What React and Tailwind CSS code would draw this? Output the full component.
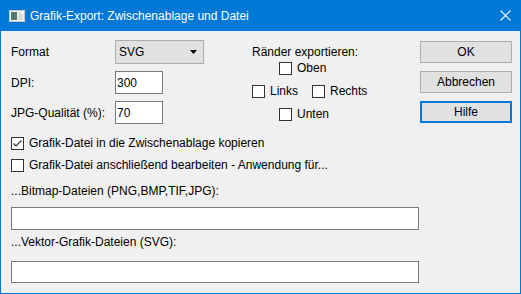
import React from 'react';

const font = { fontFamily: '"Liberation Sans", Arial, sans-serif' };

const CheckBox = ({ checked, label, className = '' }) => (
  <div className={`flex items-center h-[13px] ${className}`}>
    <span className="w-[13px] h-[13px] border border-[#333333] bg-white flex items-center justify-center shrink-0">
      {checked && (
        <svg width="11" height="11" viewBox="0 0 11 11">
          <path d="M1.5 5.5 L4 8 L9.5 2.5" fill="none" stroke="#333" strokeWidth="1.2" />
        </svg>
      )}
    </span>
    {label && <span className="ml-[5px] text-[12px] leading-[13px] text-black whitespace-nowrap">{label}</span>}
  </div>
);

const Button = ({ children, focused }) => (
  <button
    className={`w-[92px] h-[22px] bg-[#e1e1e1] text-[12px] text-black flex items-center justify-center ${
      focused ? 'border-2 border-[#0078d7]' : 'border border-[#adadad]'
    }`}
  >
    {children}
  </button>
);

export default function App() {
  return (
    <div className="w-[521px] h-[294px] flex flex-col select-none" style={font}>
      {/* title bar */}
      <div className="h-[31px] bg-[#0078d7] flex items-center pl-[9px] pr-[10px] shrink-0">
        <svg width="16" height="12" viewBox="0 0 16 12">
          <rect x="0.5" y="0.5" width="15" height="11" fill="#f4f4f4" stroke="#c8c8c8" />
          <rect x="2" y="2" width="6" height="8" fill="#4f7e68" />
          <rect x="9" y="2" width="5" height="8" fill="#dcdcdc" />
          <rect x="12" y="2" width="2" height="2" fill="#ffffff" />
        </svg>
        <span className="ml-[5px] text-white text-[12px]">Grafik-Export: Zwischenablage und Datei</span>
        <svg className="ml-auto" width="11" height="11" viewBox="0 0 11 11">
          <path d="M0.5 0.5 L10.5 10.5 M10.5 0.5 L0.5 10.5" stroke="#fff" strokeWidth="1.1" />
        </svg>
      </div>

      {/* body */}
      <div className="flex-1 bg-[#f0f0f0] border-x border-b border-[#0078d7] pl-[10px] flex flex-col text-[12px] text-black">
        <div className="flex">
          {/* left column */}
          <div className="w-[193px] pt-[9px] flex flex-col">
            <div className="flex items-center h-[24px]">
              <span className="w-[104px]">Format</span>
              <div className="w-[89px] h-[24px] bg-[#e1e1e1] border border-[#adadad] flex items-center pl-[3px] pr-[6px]">
                <span>SVG</span>
                <svg className="ml-auto" width="7" height="4" viewBox="0 0 7 4">
                  <path d="M0 0 H7 L3.5 4 Z" fill="#000" />
                </svg>
              </div>
            </div>
            <div className="flex items-center h-[23px] mt-[7px]">
              <span className="w-[104px]">DPI:</span>
              <div className="w-[48px] h-[23px] bg-white border border-[#7a7a7a] flex items-center pl-[1px]">300</div>
            </div>
            <div className="flex items-center h-[23px] mt-[7px]">
              <span className="w-[104px] whitespace-nowrap">JPG-Qualität (%):</span>
              <div className="w-[48px] h-[23px] bg-white border border-[#7a7a7a] flex items-center pl-[1px]">70</div>
            </div>
          </div>

          {/* margins */}
          <div className="ml-[48px] w-[168px] pt-[13px] flex flex-col">
            <div className="h-[16px] flex items-center">Ränder exportieren:</div>
            <CheckBox className="mt-[2px] ml-[27px]" label="Oben" />
            <div className="flex mt-[10px]">
              <CheckBox label="Links" />
              <CheckBox className="ml-[14px]" label="Rechts" />
            </div>
            <CheckBox className="mt-[10px] ml-[27px]" label="Unten" />
          </div>

          {/* buttons */}
          <div className="pt-[10px] flex flex-col gap-[8px]">
            <Button>OK</Button>
            <Button>Abbrechen</Button>
            <Button focused>Hilfe</Button>
          </div>
        </div>

        <CheckBox className="mt-[13px]" checked label="Grafik-Datei in die Zwischenablage kopieren" />
        <CheckBox className="mt-[9px]" label="Grafik-Datei anschließend bearbeiten - Anwendung für..." />

        <div className="mt-[12px] h-[14px] flex items-center">...Bitmap-Dateien (PNG,BMP,TIF,JPG):</div>
        <div className="mt-[9px] w-[408px] h-[23px] bg-white border border-[#7a7a7a]"></div>

        <div className="mt-[5px] h-[14px] flex items-center">...Vektor-Grafik-Dateien (SVG):</div>
        <div className="mt-[12px] w-[408px] h-[22px] bg-white border border-[#7a7a7a]"></div>
      </div>
    </div>
  );
}
